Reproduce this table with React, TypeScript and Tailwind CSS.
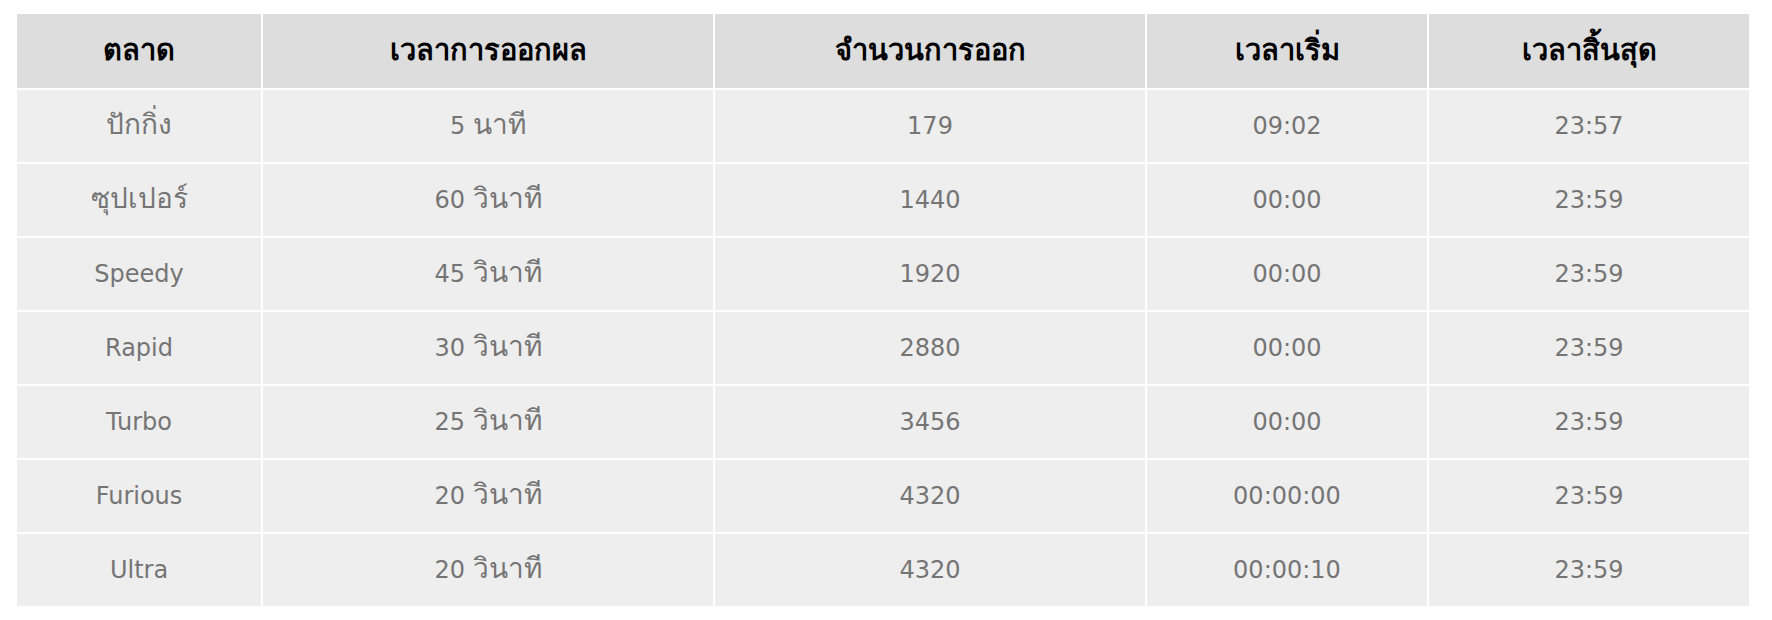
const headers = [
  { label: "ตลาด", w: "w-[244px]" },
  { label: "เวลาการออกผล", w: "w-[450px]" },
  { label: "จำนวนการออก", w: "w-[430px]" },
  { label: "เวลาเริ่ม", w: "w-[280px]" },
  { label: "เวลาสิ้นสุด", w: "w-[320px]" },
];

const rows = [
  ["ปักกิ่ง", "5 นาที", "179", "09:02", "23:57"],
  ["ซุปเปอร์", "60 วินาที", "1440", "00:00", "23:59"],
  ["Speedy", "45 วินาที", "1920", "00:00", "23:59"],
  ["Rapid", "30 วินาที", "2880", "00:00", "23:59"],
  ["Turbo", "25 วินาที", "3456", "00:00", "23:59"],
  ["Furious", "20 วินาที", "4320", "00:00:00", "23:59"],
  ["Ultra", "20 วินาที", "4320", "00:00:10", "23:59"],
];

// Thai glyphs come from a fallback font that runs small, so bump those runs
const Cell = ({ text }: { text: string }) => (
  <>
    {text.split(/([\u0E00-\u0E7F]+)/).map((part, i) =>
      /[\u0E00-\u0E7F]/.test(part) ? (
        <span key={i} className="text-[28px] leading-none">
          {part}
        </span>
      ) : (
        part
      )
    )}
  </>
);

const App = () => {
  return (
    <div className="bg-white w-[1772px] h-[620px] pt-[12px] pl-[15px] font-['DejaVu_Sans','Noto_Sans',sans-serif]">
      <table className="table-fixed border-separate border-spacing-[2px] w-[1736px] text-[24px]">
        <thead>
          <tr className="bg-[#dddddd]">
            {headers.map((h) => (
              <th key={h.label} className={`${h.w} h-[74px] p-0 text-center font-bold text-[29px] text-black`}>
                {h.label}
              </th>
            ))}
          </tr>
        </thead>
        <tbody>
          {rows.map((r, i) => (
            <tr key={i} className="bg-[#eeeeee]">
              {r.map((c, j) => (
                <td key={j} className="h-[72px] p-0 text-center text-[#757575]">
                  <Cell text={c} />
                </td>
              ))}
            </tr>
          ))}
        </tbody>
      </table>
    </div>
  );
};

export default App;
